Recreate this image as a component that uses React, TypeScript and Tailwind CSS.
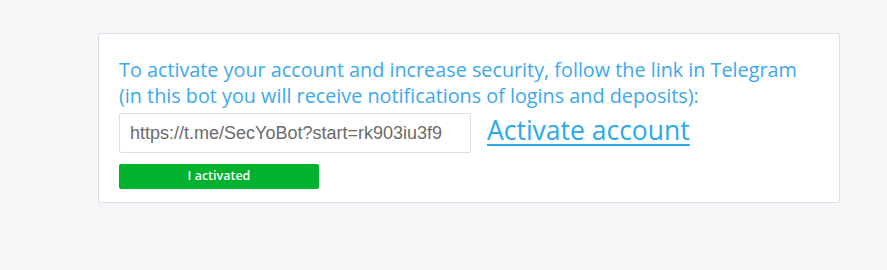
export default function App() {
  return (
    <div className="min-h-[270px] w-full bg-[#f4f6f8] pt-[33px] pl-[98px] font-['Open_Sans',sans-serif]">
      <section className="flex h-[170px] w-[742px] flex-col rounded-[2px] border border-[#d9dfe7] bg-white pl-[20px] pt-[23px]">
        <p className="text-[19.8px] leading-[26px] text-[#3ca8ef]">
          To activate your account and increase security, follow the link in Telegram
          <br />
          (in this bot you will receive notifications of logins and deposits):
        </p>
        <div className="mt-[4px] flex items-center gap-[16px]">
          <input
            readOnly
            value="https://t.me/SecYoBot?start=rk903iu3f9"
            className="h-[40px] w-[352px] rounded-[2px] border border-[#d9dfe7] px-[10px] font-['Liberation_Sans',sans-serif] text-[18px] text-[#6b6b6b] outline-none"
          />
          <a href="#" className="mb-[6px] text-[26.5px] leading-none text-[#2aa9ec] underline decoration-[2px] underline-offset-[4px]">
            Activate account
          </a>
        </div>
        <button
          type="button"
          className="mt-[11px] h-[25px] w-[200px] rounded-[2px] bg-[#00b22d] text-[12.5px] font-semibold text-white"
        >
          I activated
        </button>
      </section>
    </div>
  )
}
